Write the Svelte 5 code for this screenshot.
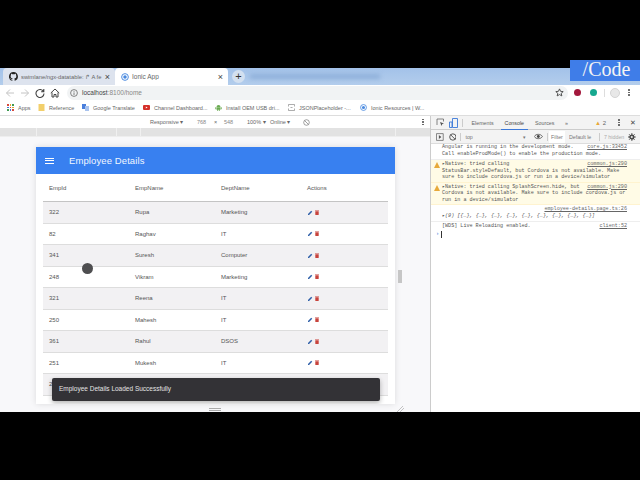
<script>
	const bookmarks = [
		{ label: "Apps", kind: "apps", w: 20 },
		{ label: "Reference", kind: "folder", w: 33 },
		{ label: "Google Translate", kind: "translate", w: 50 },
		{ label: "Channel Dashboard...", kind: "youtube", w: 61 },
		{ label: "Install OEM USB dri...", kind: "android", w: 62 },
		{ label: "JSONPlaceholder -...", kind: "json", w: 61 },
		{ label: "Ionic Resources | W...", kind: "ionic", w: 60 },
	];

	const appDots = ["#d8483b", "#e0a92e", "#3f9a52", "#3b78d8", "#d8483b", "#e0a92e", "#3f9a52", "#3b78d8", "#d8483b"];

	const employees = [
		{ id: 322, name: "Rupa", dept: "Marketing" },
		{ id: 82, name: "Raghav", dept: "IT" },
		{ id: 341, name: "Suresh", dept: "Computer" },
		{ id: 248, name: "Vikram", dept: "Marketing" },
		{ id: 321, name: "Reena", dept: "IT" },
		{ id: 250, name: "Mahesh", dept: "IT" },
		{ id: 361, name: "Rahul", dept: "DSOS" },
		{ id: 251, name: "Mukesh", dept: "IT" },
		{ id: 2, name: "", dept: "" },
	];
</script>

<div class="screen">
	<div class="bar"></div>

	<div class="browser">
		<div class="tabs">
			<div class="tab inactive">
				<svg width="9" height="9" viewBox="0 0 16 16"><path fill="#222" d="M8 0a8 8 0 0 0-2.500 15.600c.4.100.5-.2.5-.4v-1.400c-2.200.5-2.700-1-2.700-1-.4-.9-.9-1.200-.9-1.200-.7-.5.1-.5.1-.5.8.1 1.200.8 1.200.8.7 1.200 1.900.9 2.300.7.1-.5.3-.9.5-1.100-1.800-.2-3.600-.9-3.600-4 0-.9.3-1.600.8-2.100-.1-.2-.4-1 .1-2.100 0 0 .7-.2 2.200.8a7.600 7.600 0 0 1 4 0c1.500-1 2.200-.8 2.200-.8.4 1.100.2 1.900.1 2.100.5.6.8 1.300.8 2.100 0 3.100-1.900 3.700-3.700 3.900.3.300.6.800.6 1.500v2.200c0 .2.100.5.600.4A8 8 0 0 0 8 0z"/></svg>
				<span class="tab-title">swimlane/ngx-datatable: ↱ A fe</span>
				<span class="close">×</span>
			</div>
			<div class="tab active">
				<svg width="8" height="8" viewBox="0 0 10 10"><circle cx="5" cy="5" r="4.200" fill="none" stroke="#4a8ae0" stroke-width="1.200"/><circle cx="5" cy="5" r="2.200" fill="#4a8ae0"/></svg>
				<span class="tab-title">Ionic App</span>
				<span class="close">×</span>
			</div>
			<div class="new-tab">+</div>
			<div class="blur-title"></div>
		</div>

		<div class="toolbar">
			<svg class="nav" width="10" height="10" viewBox="0 0 10 10"><path d="M9 5H1.500M5 1.500 1.500 5 5 8.500" fill="none" stroke="#c4c4c4" stroke-width="1"/></svg>
			<svg class="nav" width="10" height="10" viewBox="0 0 10 10"><path d="M1 5h7.500M5 1.500 8.500 5 5 8.500" fill="none" stroke="#c4c4c4" stroke-width="1"/></svg>
			<svg class="nav" width="10" height="10" viewBox="0 0 10 10"><path d="M8.500 3.500A4 4 0 1 0 9 5.500M8.800 1v2.700H6.100" fill="none" stroke="#444" stroke-width="1.100"/></svg>
			<svg class="nav" width="10" height="10" viewBox="0 0 10 10"><path d="M.8 5 5 1l4.200 4M2 4.500V9h2V6.500h2V9h2V4.500" fill="none" stroke="#444" stroke-width="1"/></svg>
			<div class="omnibox">
				<svg width="8" height="8" viewBox="0 0 8 8"><circle cx="4" cy="4" r="3.400" fill="none" stroke="#666" stroke-width=".8"/><path d="M4 3.400v2.600M4 2v.8" stroke="#666" stroke-width=".8"/></svg>
				<span class="url">localhost<span class="port">:8100/home</span></span>
				<svg width="9" height="9" viewBox="0 0 10 10"><path d="M5 1l1.200 2.700 2.900.3-2.200 1.900.7 2.900L5 7.300 2.400 8.800l.7-2.900L.9 4l2.900-.3z" fill="none" stroke="#444" stroke-width="1"/></svg>
			</div>
			<div class="extensions">
				<span class="ext red"></span>
				<span class="ext teal"></span>
				<span class="divider"></span>
				<span class="avatar"></span>
				<span class="dots"><i></i><i></i><i></i></span>
			</div>
		</div>

		<div class="bookmarks">
			{#each bookmarks as b}
				<div class="bookmark">
					{#if b.kind === "apps"}
						<span class="apps-grid">
							{#each appDots as c}<i style="background: {c}"></i>{/each}
						</span>
					{:else if b.kind === "folder"}
						<svg width="6" height="7" viewBox="0 0 6 7"><path d="M0 0h6v7H0z" fill="#f2cf6b"/></svg>
					{:else if b.kind === "translate"}
						<svg width="7" height="7" viewBox="0 0 7 7"><path d="M0 0h4v5H0z" fill="#4a7fdc"/><path d="M3 2h4v5H3z" fill="#a9c3ee"/></svg>
					{:else if b.kind === "youtube"}
						<svg width="7" height="5" viewBox="0 0 7 5"><rect width="7" height="5" rx="1" fill="#d5302a"/><path d="M2.800 1.400v2.200L4.600 2.500z" fill="#fff"/></svg>
					{:else if b.kind === "android"}
						<svg width="7" height="7" viewBox="0 0 7 7"><path d="M1.500 3a2 2 0 0 1 4 0zM1.500 3.300h4v2.400h-4zM.3 3.300h.8v2H.3zM5.900 3.300h.8v2h-.8zM2.300 5.700h.8V7h-.8zM3.900 5.700h.8V7h-.8z" fill="#6bab52"/></svg>
					{:else if b.kind === "json"}
						<svg width="7" height="7" viewBox="0 0 7 7"><path d="M.5 2.500V.5h6v2M.5 4.500v2h6v-2M2.500 3.500h2" fill="none" stroke="#777" stroke-width=".6"/></svg>
					{:else}
						<svg width="7" height="7" viewBox="0 0 10 10"><circle cx="5" cy="5" r="4.200" fill="none" stroke="#4a8ae0" stroke-width="1.200"/><circle cx="5" cy="5" r="2.200" fill="#4a8ae0"/></svg>
					{/if}
					<span style="width: {b.w}px">{b.label}</span>
				</div>
			{/each}
		</div>

		<div class="content">
			<div class="viewport">
				<div class="device-bar">
					<span class="d-mode">Responsive ▾</span>
					<span class="d-w">768</span>
					<span class="d-x">×</span>
					<span class="d-h">548</span>
					<span class="d-zoom">100% ▾</span>
					<span class="d-net">Online ▾</span>
					<svg width="7" height="7" viewBox="0 0 8 8"><circle cx="4" cy="4" r="3.200" fill="none" stroke="#777" stroke-width=".8"/><path d="M1.800 1.800l4.400 4.400" stroke="#777" stroke-width=".8"/></svg>
					<span class="dots device-more"><i></i><i></i><i></i></span>
				</div>
				<div class="ruler"></div>
				<div class="stage">
					<div class="device">
						<header class="app-header">
							<div class="burger"><i></i><i></i><i></i></div>
							<h1>Employee Details</h1>
						</header>
						<div class="table">
							<div class="row head">
								<span>EmpId</span><span>EmpName</span><span>DeptName</span><span>Actions</span>
							</div>
							{#each employees as e}
								<div class="row">
									<span>{e.id}</span>
									<span>{e.name}</span>
									<span>{e.dept}</span>
									<span class="actions">
										{#if e.name}
											<svg width="5" height="5" viewBox="0 0 6 6"><path d="M0 6V4.700L3.800.9 5.100 2.200 1.300 6z" fill="#2f5fa8"/></svg>
											<svg width="4" height="5" viewBox="0 0 4 5"><path d="M.3 1.300h3.400V4.500a.5.500 0 0 1-.5.500H.8a.5.500 0 0 1-.5-.5zM0 .4h4v.6H0z" fill="#c8433c"/></svg>
										{/if}
									</span>
								</div>
							{/each}
						</div>
						<div class="toast">Employee Details Loaded Successfully</div>
					</div>
					<div class="side-handle"></div>
					<div class="cursor"></div>
					<div class="bottom-handle"></div>
					<svg class="corner" width="7" height="6" viewBox="0 0 7 6"><path d="M0 6 6 0M3 6 7 2" stroke="#aaa" stroke-width=".7"/></svg>
				</div>
			</div>

			<div class="devtools">
				<div class="dt-tabs">
					<svg width="9" height="9" viewBox="0 0 9 9"><path d="M1 7V1h6.500v2.500" fill="none" stroke="#666" stroke-width=".8"/><path d="M4 4l4 1.500-1.700.6L5.500 8z" fill="#555"/></svg>
					<svg width="9" height="10" viewBox="0 0 9 10"><path d="M3.500.5h5v9h-5zM.5 4h2.500v5.500H.5z" fill="none" stroke="#3b78d8" stroke-width=".9"/></svg>
					<span class="sep"></span>
					<span class="dt-tab first">Elements</span>
					<span class="dt-tab current">Console</span>
					<span class="dt-tab">Sources</span>
					<span class="dt-tab chev">»</span>
					<span class="warn-count"><b>▲</b> 2</span>
					<span class="dots dt-dots"><i></i><i></i><i></i></span>
					<span class="dt-close">✕</span>
				</div>
				<div class="dt-filter">
					<svg width="8" height="8" viewBox="0 0 8 8"><path d="M.5.500h7v7h-7z" fill="none" stroke="#666" stroke-width=".8"/><path d="M3 2l2.500 2L3 6z" fill="#555"/></svg>
					<svg class="no-entry" width="8" height="8" viewBox="0 0 8 8"><circle cx="4" cy="4" r="3.300" fill="none" stroke="#444" stroke-width=".9"/><path d="M1.700 1.700l4.600 4.600" stroke="#444" stroke-width=".9"/></svg>
					<span class="sep"></span>
					<span class="context">top</span>
					<span class="caret">▾</span>
					<svg width="9" height="7" viewBox="0 0 9 7"><path d="M.3 3.500C2 .5 7 .5 8.700 3.500 7 6.500 2 6.500.3 3.500z" fill="none" stroke="#444" stroke-width=".8"/><circle cx="4.500" cy="3.500" r="1.500" fill="#444"/></svg>
					<span class="sep"></span>
					<span class="filter">Filter</span>
					<span class="level">Default le</span>
					<span class="sep"></span>
					<span class="muted">7 hidden</span>
					<svg class="gear" width="8" height="8" viewBox="0 0 8 8"><circle cx="4" cy="4" r="2" fill="none" stroke="#444" stroke-width="1.300"/><path d="M4 0v8M0 4h8M1.200 1.200l5.600 5.600M6.800 1.200 1.200 6.800" stroke="#444" stroke-width="1"/><circle cx="4" cy="4" r="1" fill="#f3f3f3"/></svg>
				</div>
				<div class="console">
					<div class="msg">
						<div class="line"><span>Angular is running in the development mode.</span><u>core.js:33452</u></div>
						<div class="line"><span>Call enableProdMode() to enable the production mode.</span></div>
					</div>
					<div class="msg warn">
						<div class="line"><span>▸Native: tried calling</span><u>common.js:290</u></div>
						<div class="line"><span>StatusBar.styleDefault, but Cordova is not available. Make</span></div>
						<div class="line"><span>sure to include cordova.js or run in a device/simulator</span></div>
						<svg class="warn-icon" width="6" height="6" viewBox="0 0 6 6"><path d="M3 0 6 6H0z" fill="#e8a93a"/></svg>
					</div>
					<div class="msg warn">
						<div class="line"><span>▸Native: tried calling SplashScreen.hide, but</span><u>common.js:290</u></div>
						<div class="line"><span>Cordova is not available. Make sure to include cordova.js or</span></div>
						<div class="line"><span>run in a device/simulator</span></div>
						<svg class="warn-icon" width="6" height="6" viewBox="0 0 6 6"><path d="M3 0 6 6H0z" fill="#e8a93a"/></svg>
					</div>
					<div class="msg">
						<div class="line right"><u>employee-details.page.ts:26</u></div>
						<div class="line"><i>▸(9) [&#123;…&#125;, &#123;…&#125;, &#123;…&#125;, &#123;…&#125;, &#123;…&#125;, &#123;…&#125;, &#123;…&#125;, &#123;…&#125;, &#123;…&#125;]</i></div>
					</div>
					<div class="msg">
						<div class="line"><span>[WDS] Live Reloading enabled.</span><u>client:52</u></div>
					</div>
					<div class="prompt"><span>›</span><i></i></div>
				</div>
			</div>
		</div>
	</div>

	<div class="bar"></div>
	<div class="brand">/Code</div>
</div>

<style>
	:global(body) {
		margin: 0;
		background: #000;
	}
	.screen {
		position: relative;
		width: 640px;
		height: 480px;
		display: flex;
		flex-direction: column;
		overflow: hidden;
		font-family: "Liberation Sans", Arial, sans-serif;
		color: #555;
		background: #000;
	}
	.bar {
		height: 68px;
		flex: none;
		background: #000;
	}
	.browser {
		height: 344px;
		flex: none;
		display: flex;
		flex-direction: column;
		background: #fff;
	}

	.tabs {
		height: 17px;
		flex: none;
		display: flex;
		align-items: flex-end;
		background: linear-gradient(to bottom, #a3c2e9, #b3cdec);
		padding-left: 3px;
	}
	.tab {
		height: 17px;
		display: flex;
		align-items: center;
		gap: 3px;
		box-sizing: border-box;
		border-radius: 4px 4px 0 0;
		color: #666;
		white-space: nowrap;
	}
	.tab.inactive {
		width: 112px;
		background: #dde3ee;
		padding-left: 6px;
		font-size: 5.800px;
	}
	.tab.active {
		width: 113px;
		background: #fff;
		padding-left: 6px;
		font-size: 6.500px;
	}
	.tab-title {
		flex: 1;
		overflow: hidden;
	}
	.close {
		flex: none;
		font-size: 9px;
		color: #444;
		margin-right: 5px;
	}
	.new-tab {
		width: 13px;
		height: 13px;
		margin: 0 0 2px 4px;
		border-radius: 50%;
		background: #d3e0f0;
		color: #333;
		font-size: 11px;
		line-height: 13px;
		text-align: center;
	}
	.blur-title {
		width: 130px;
		height: 5px;
		margin: 0 0 6px 5px;
		background: #8fb0da;
		filter: blur(2px);
	}

	.toolbar {
		height: 15px;
		flex: none;
		display: flex;
		align-items: center;
		padding-left: 5px;
		gap: 5px;
	}
	.nav {
		flex: none;
	}
	.omnibox {
		width: 501px;
		height: 14px;
		flex: none;
		margin-left: 2px;
		display: flex;
		align-items: center;
		gap: 4px;
		box-sizing: border-box;
		padding: 0 4px 0 3px;
		background: #f1f3f4;
		border-radius: 7px;
		font-size: 6.500px;
	}
	.url {
		flex: 1;
		color: #444;
	}
	.port {
		color: #888;
	}
	.extensions {
		display: flex;
		align-items: center;
		gap: 9px;
		margin-left: 1px;
	}
	.ext {
		width: 7px;
		height: 7px;
		border-radius: 50%;
	}
	.ext.red {
		background: #a3183c;
	}
	.ext.teal {
		background: #16a88f;
	}
	.divider {
		width: 1px;
		height: 8px;
		margin-left: -2px;
		background: #ddd;
	}
	.avatar {
		width: 10px;
		height: 10px;
		margin-left: -4px;
		border-radius: 50%;
		background: #e8e8e8;
		border: 1px solid #d4d4d4;
		box-sizing: border-box;
	}
	.dots {
		display: flex;
		flex-direction: column;
		gap: 1px;
		width: 2px;
		margin-left: -1px;
	}
	.dots i {
		width: 1.500px;
		height: 1.500px;
		border-radius: 50%;
		background: #555;
	}

	.bookmarks {
		height: 16px;
		flex: none;
		display: flex;
		align-items: center;
		box-sizing: border-box;
		padding-left: 7px;
		font-size: 5.500px;
		color: #666;
		white-space: nowrap;
		border-bottom: 1px solid #ddd;
	}
	.bookmark {
		display: flex;
		align-items: center;
	}
	.bookmark svg,
	.apps-grid {
		flex: none;
		width: 7px;
		margin-right: 4px;
	}
	.apps-grid {
		display: grid;
		grid-template-columns: repeat(3, 1.500px);
		gap: 1px;
		height: 6.500px;
	}
	.apps-grid i {
		width: 1.500px;
		height: 1.500px;
	}

	.content {
		flex: 1;
		min-height: 0;
		display: flex;
	}
	.viewport {
		width: 431px;
		flex: none;
		display: flex;
		flex-direction: column;
		border-right: 1px solid #ccc;
		box-sizing: border-box;
	}
	.device-bar {
		height: 12px;
		flex: none;
		display: flex;
		align-items: center;
		box-sizing: border-box;
		padding-left: 150px;
		font-size: 5.500px;
		color: #666;
		white-space: nowrap;
	}
	.d-mode {
		width: 35px;
	}
	.d-w,
	.d-h {
		width: 9px;
		color: #888;
	}
	.d-w {
		margin-left: 12px;
	}
	.d-x {
		width: 3px;
		margin-left: 8px;
	}
	.d-h {
		margin-left: 7px;
	}
	.d-zoom {
		width: 20px;
		margin-left: 14px;
	}
	.d-net {
		width: 24px;
		margin-left: 3px;
		margin-right: 9px;
	}
	.device-more {
		margin-left: auto;
		margin-right: 6px;
	}
	.ruler {
		height: 9px;
		flex: none;
		box-sizing: border-box;
		border-bottom: 1px solid #eee;
		background:
			linear-gradient(#f0f0f0, #f0f0f0) 36px 0 / 1px 100% no-repeat,
			linear-gradient(#f0f0f0, #f0f0f0) 116px 0 / 1px 100% no-repeat,
			linear-gradient(#f0f0f0, #f0f0f0) 140px 0 / 1px 100% no-repeat,
			linear-gradient(#f0f0f0, #f0f0f0) 395px 0 / 1px 100% no-repeat,
			#e2e2e2;
	}
	.stage {
		position: relative;
		flex: 1;
		min-height: 0;
		padding: 10px 0 0 36px;
		background: #f8f8fa;
		overflow: hidden;
	}
	.device {
		position: relative;
		width: 359px;
		height: 257px;
		background: #fff;
		box-shadow: 0 0 6px rgba(0, 0, 0, 0.12);
		overflow: hidden;
	}
	.app-header {
		height: 27px;
		display: flex;
		align-items: center;
		background: #3880f0;
		color: #f1f6ff;
	}
	.burger {
		display: flex;
		flex-direction: column;
		gap: 1.500px;
		width: 9px;
		margin-left: 9px;
	}
	.burger i {
		height: 1px;
		background: #fff;
	}
	.app-header h1 {
		margin: 0 0 0 15px;
		font-size: 9.500px;
		font-weight: 400;
		letter-spacing: 0.1px;
	}
	.table {
		margin: 0 7px;
		font-size: 6px;
		color: #555;
	}
	.row {
		height: 21.500px;
		display: grid;
		grid-template-columns: 86px 86px 86px 1fr;
		align-items: center;
		padding-left: 6px;
		box-sizing: border-box;
		border-bottom: 1px solid #ddd;
	}
	.row.head {
		height: 28px;
		padding-top: 1px;
		border-bottom: 1px solid #c4c4c4;
	}
	.row:nth-child(even) {
		background: #f2f1f3;
	}
	.actions {
		display: flex;
		align-items: center;
		gap: 2px;
		padding-left: 1px;
	}
	.toast {
		position: absolute;
		left: 16px;
		top: 231px;
		width: 328px;
		height: 23px;
		box-sizing: border-box;
		padding: 0 7px;
		line-height: 22px;
		border-radius: 2px;
		background: #333236;
		color: #e4e4e4;
		font-size: 6.500px;
		box-shadow: 0 2px 5px rgba(0, 0, 0, 0.3);
	}
	.side-handle {
		position: absolute;
		left: 398px;
		top: 133px;
		width: 4px;
		height: 13px;
		background: #c6c6c6;
	}
	.cursor {
		position: absolute;
		left: 82px;
		top: 126px;
		width: 11px;
		height: 11px;
		border-radius: 50%;
		background: #4e4e50;
	}
	.bottom-handle {
		position: absolute;
		left: 209px;
		top: 271px;
		width: 12px;
		height: 3px;
		border-top: 1px solid #aaa;
		border-bottom: 1px solid #aaa;
		box-sizing: border-box;
	}
	.corner {
		position: absolute;
		left: 397px;
		top: 269px;
	}

	.devtools {
		flex: 1;
		min-width: 0;
		display: flex;
		flex-direction: column;
		background: #fff;
	}
	.dt-tabs {
		height: 13px;
		flex: none;
		display: flex;
		align-items: center;
		gap: 4px;
		padding-left: 5px;
		background: #f3f3f3;
		border-bottom: 1px solid #ccc;
		font-size: 5.300px;
		color: #666;
	}
	.sep {
		width: 1px;
		height: 8px;
		background: #ccc;
		flex: none;
	}
	.dt-tab {
		padding: 0 3.500px;
		line-height: 12px;
	}
	.dt-tab.first {
		margin-left: 1px;
	}
	.dt-tab.current {
		color: #444;
		border-bottom: 1px solid #3b78d8;
		margin-bottom: -1px;
	}
	.dt-tab.chev {
		padding: 0 0 0 3px;
	}
	.warn-count {
		margin-left: auto;
		font-size: 6px;
	}
	.warn-count b {
		color: #e8a93a;
		font-weight: 400;
	}
	.dt-dots {
		margin-left: 8px;
	}
	.dt-close {
		font-size: 7px;
		color: #444;
		margin-left: 6px;
		margin-right: 4px;
	}
	.dt-filter {
		height: 13px;
		flex: none;
		display: flex;
		align-items: center;
		gap: 4px;
		padding-left: 5px;
		background: #f3f3f3;
		border-bottom: 1px solid #ddd;
		font-size: 5.300px;
		color: #777;
	}
	.no-entry {
		margin-left: 1px;
	}
	.context {
		width: 58px;
	}
	.caret {
		margin-left: -2px;
		margin-right: 4px;
	}
	.filter {
		background: #fff;
		padding: 0 2px;
		line-height: 12px;
		margin-left: -3px;
	}
	.level {
		width: 27px;
		overflow: hidden;
		white-space: nowrap;
	}
	.muted {
		color: #aaa;
		white-space: nowrap;
	}
	.gear {
		margin-left: auto;
		margin-right: 4px;
	}
	.console {
		flex: 1;
		font-family: "Liberation Mono", monospace;
		font-size: 5.100px;
		line-height: 6.500px;
		color: #555;
	}
	.msg {
		position: relative;
		padding: 0 13px 2px 11px;
		border-bottom: 1px solid #eee;
	}
	.msg.warn {
		background: #fffbe6;
		border-bottom-color: #fff3cf;
		padding-top: 1px;
		padding-bottom: 1px;
	}
	.msg:nth-child(4) {
		padding-top: 1px;
	}
	.msg:nth-child(5) {
		padding-top: 1px;
		padding-bottom: 1px;
		border-bottom: none;
	}
	.line {
		display: flex;
		justify-content: space-between;
		white-space: nowrap;
	}
	.line.right {
		justify-content: flex-end;
	}
	.line u {
		color: #666;
	}
	.warn-icon {
		position: absolute;
		left: 3px;
		top: 2px;
	}
	.prompt {
		display: flex;
		align-items: center;
		gap: 2px;
		padding: 0 0 0 5px;
		color: #3b78d8;
	}
	.prompt i {
		width: 1px;
		height: 7px;
		background: #333;
	}
	.brand {
		position: absolute;
		right: 0;
		top: 60px;
		width: 70px;
		height: 21px;
		background: #3f7de8;
		color: #f4f4f4;
		font-family: "Liberation Serif", serif;
		font-size: 20px;
		line-height: 19px;
		padding-left: 3px;
		box-sizing: border-box;
		text-align: center;
	}
</style>
